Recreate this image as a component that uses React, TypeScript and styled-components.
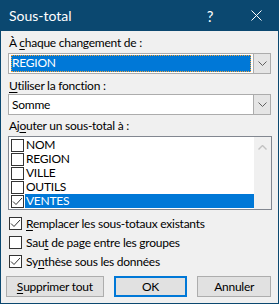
import React from 'react';
import styled, { createGlobalStyle } from 'styled-components';

const GlobalStyle = createGlobalStyle`
  html, body {
    margin: 0;
    padding: 0;
    background: #f0f0f0;
  }
  * {
    box-sizing: border-box;
  }
`;

const fields = ['NOM', 'REGION', 'VILLE', 'OUTILS', 'VENTES'];

const CheckMark = () => (
  <svg width="11" height="11" viewBox="0 0 11 11">
    <polyline points="1,5.5 4,8.5 10,2" fill="none" stroke="#333" strokeWidth="1" />
  </svg>
);

const ChevronDown = () => (
  <svg width="9" height="5" viewBox="0 0 9 5">
    <polyline points="0.5,0.5 4.5,4.5 8.5,0.5" fill="none" stroke="#606060" strokeWidth="1" />
  </svg>
);

const ChevronUp = () => (
  <svg width="9" height="5" viewBox="0 0 9 5">
    <polyline points="0.5,4.5 4.5,0.5 8.5,4.5" fill="none" stroke="#c2c2c2" strokeWidth="1.4" />
  </svg>
);

const CloseIcon = () => (
  <svg width="11" height="11" viewBox="0 0 11 11">
    <line x1="0.5" y1="0.5" x2="10.5" y2="10.5" stroke="#fff" strokeWidth="1" />
    <line x1="10.5" y1="0.5" x2="0.5" y2="10.5" stroke="#fff" strokeWidth="1" />
  </svg>
);

const App = () => {
  return (
    <>
      <GlobalStyle />
      <Window>
        <TitleBar>
          <Title>Sous-total</Title>
          <HelpButton>?</HelpButton>
          <CloseButton>
            <CloseIcon />
          </CloseButton>
        </TitleBar>
        <Body>
          <Label>
            À <u>c</u>haque changement de :
          </Label>
          <Combo>
            <ComboValue>
              <Selection>REGION</Selection>
            </ComboValue>
            <ComboArrow>
              <ChevronDown />
            </ComboArrow>
          </Combo>

          <Label className="second">
            <u>U</u>tiliser la fonction :
          </Label>
          <Combo>
            <ComboValue>
              <PlainValue>Somme</PlainValue>
            </ComboValue>
            <ComboArrow>
              <ChevronDown />
            </ComboArrow>
          </Combo>

          <Label className="third">
            Aj<u>o</u>uter un sous-total à :
          </Label>
          <ListBox>
            <Items>
              {fields.map((name) => {
                const selected = name === 'VENTES';
                return (
                  <Item key={name}>
                    <Box>{selected && <CheckMark />}</Box>
                    <ItemText $selected={selected}>{name}</ItemText>
                  </Item>
                );
              })}
            </Items>
            <ScrollTrack>
              <ChevronUp />
            </ScrollTrack>
          </ListBox>

          <Options>
            <Option>
              <Box>
                <CheckMark />
              </Box>
              <span>
                <u>R</u>emplacer les sous-totaux existants
              </span>
            </Option>
            <Option>
              <Box />
              <span>
                Sau<u>t</u> de page entre les groupes
              </span>
            </Option>
            <Option>
              <Box>
                <CheckMark />
              </Box>
              <span>
                Sy<u>n</u>thèse sous les données
              </span>
            </Option>
          </Options>

          <Buttons>
            <Button $width={98}>
              <u>S</u>upprimer tout
            </Button>
            <Button $width={74} $primary>
              OK
            </Button>
            <Button $width={74}>Annuler</Button>
          </Buttons>
        </Body>
      </Window>
    </>
  );
};

export default App;

const Window = styled.div`
  width: 279px;
  height: 304px;
  background: #f0f0f0;
  border: 1px solid #0b4870;
  border-top: none;
  display: flex;
  flex-direction: column;
  font-family: 'Lato', 'Noto Sans', sans-serif;
  font-size: 12px;
  letter-spacing: -0.25px;
  color: #000;

  u {
    text-decoration: underline;
    text-underline-offset: 2px;
  }
`;

const TitleBar = styled.div`
  height: 31px;
  margin: 0 -1px;
  background: #0b4870;
  color: #fff;
  display: flex;
  align-items: center;
  padding-left: 9px;
`;

const Title = styled.span`
  font-size: 14px;
  letter-spacing: 0;
  flex: 1;
`;

const HelpButton = styled.span`
  font-size: 15px;
  width: 46px;
  text-align: center;
`;

const CloseButton = styled.span`
  width: 46px;
  display: flex;
  align-items: center;
  justify-content: center;
`;

const Body = styled.div`
  flex: 1;
  display: flex;
  flex-direction: column;
  padding: 4px 7px 0 7px;
`;

const Label = styled.div`
  height: 16px;
  line-height: 16px;
  padding-left: 1px;
  margin-bottom: 2px;

  &.second {
    margin-top: 4px;
    margin-bottom: 0;
  }

  &.third {
    margin-top: 3px;
    margin-bottom: 2px;
  }
`;

const Combo = styled.div`
  height: 21px;
  width: 263px;
  display: flex;
  border: 1px solid #acacac;
  background: #fff;
`;

const ComboValue = styled.div`
  flex: 1;
  padding: 1px 2px;
  display: flex;
`;

const Selection = styled.div`
  flex: 1;
  background: #0078d7;
  color: #fff;
  line-height: 15px;
  padding-left: 1px;
  outline: 1px dotted #f2a33a;
  outline-offset: -1px;
`;

const PlainValue = styled.div`
  flex: 1;
  line-height: 17px;
  padding-left: 1px;
`;

const ComboArrow = styled.div`
  width: 17px;
  background: #e5e5e5;
  border-left: 1px solid #acacac;
  display: flex;
  align-items: center;
  justify-content: center;
`;

const ListBox = styled.div`
  width: 264px;
  height: 74px;
  border: 1px solid #828790;
  background: #fff;
  display: flex;
`;

const Items = styled.div`
  flex: 1;
  padding: 1px 0 1px 2px;
  display: flex;
  flex-direction: column;
`;

const Item = styled.div`
  height: 14px;
  display: flex;
  align-items: center;
  gap: 1px;
`;

const Box = styled.span`
  width: 13px;
  height: 13px;
  border: 1px solid #333;
  background: #fff;
  display: flex;
  align-items: center;
  justify-content: center;
  flex-shrink: 0;
`;

const ItemText = styled.span<{ $selected?: boolean }>`
  flex: 1;
  height: 14px;
  line-height: 14px;
  padding-left: 1px;
  background: ${(p) => (p.$selected ? '#0078d7' : 'transparent')};
  color: ${(p) => (p.$selected ? '#fff' : '#000')};
`;

const ScrollTrack = styled.div`
  width: 17px;
  background: #f0f0f0;
  display: flex;
  justify-content: center;
  padding-top: 8px;
`;

const Options = styled.div`
  display: flex;
  flex-direction: column;
  gap: 6px;
  margin-top: 7px;
  padding-left: 1px;
`;

const Option = styled.div`
  height: 13px;
  display: flex;
  align-items: center;
  gap: 4px;
  line-height: 13px;
`;

const Buttons = styled.div`
  display: flex;
  gap: 10px;
  margin-top: 8px;
  margin-left: -2px;
`;

const Button = styled.div<{ $width: number; $primary?: boolean }>`
  width: ${(p) => p.$width}px;
  height: 21px;
  background: #e1e1e1;
  border: ${(p) => (p.$primary ? '2px solid #0078d7' : '1px solid #adadad')};
  display: flex;
  align-items: center;
  justify-content: center;
`;
